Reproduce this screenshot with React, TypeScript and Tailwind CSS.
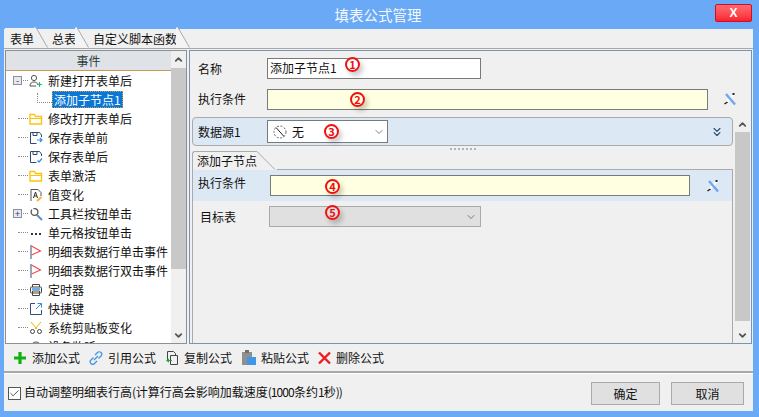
import { Check, ChevronDown, ChevronUp, ChevronsDown } from 'lucide-react';

const font = { fontFamily: '"Noto Sans CJK SC", "Liberation Sans", sans-serif' };

function Marker({ n, className }: { n: string; className: string }) {
  return (
    <span
      className={`absolute flex h-[15px] w-[15px] items-center justify-center rounded-full border-2 border-[#f01010] text-[11px] leading-none font-bold text-[#f01010] shadow-[3px_4px_5px_rgba(0,0,0,0.2)] ${className}`}
    >
      {n}
    </span>
  );
}

function Wand() {
  return (
    <svg width="14" height="14" viewBox="0 0 14 14" className="shrink-0">
      <path d="M11.500 1.500L2 12" stroke="#ffffff" strokeWidth="2.500" />
      <path d="M3 2l9 10.500" stroke="#6fa8ee" strokeWidth="2.400" />
      <path d="M1 11.500l3-2 1 1-3 2z" fill="#222" />
      <rect x="9.500" y="1" width="2" height="2" fill="#222" />
    </svg>
  );
}

function TabEdge({ active }: { active?: boolean }) {
  return (
    <svg width="14" height="21" viewBox="0 0 14 21" className="-ml-px shrink-0">
      <path d="M0 0.500 L2 0.500 L13.500 21 L0 21 Z" fill={active ? '#f0f0f0' : '#f4f4f4'} />
      <path d="M2 0.500 L13.500 20.500" stroke="#a8a8a8" fill="none" />
    </svg>
  );
}

type IconKind = 'user' | 'none' | 'folder' | 'saveIn' | 'saveOut' | 'value' | 'tool' | 'dots' | 'flag' | 'timer' | 'link' | 'scissors' | 'device';

function TreeIcon({ kind }: { kind: IconKind }) {
  const s = { width: 14, height: 14, viewBox: '0 0 14 14', fill: 'none' };
  switch (kind) {
    case 'user':
      return (
        <svg {...s}>
          <circle cx="5" cy="4" r="2.600" stroke="#555" />
          <path d="M1 12c0-3 2-4 4-4s3 .8 3.600 2M1 12h6" stroke="#555" />
          <path d="M10.500 8v5M8 10.500h5" stroke="#31b06e" strokeWidth="1.200" />
        </svg>
      );
    case 'folder':
      return (
        <svg {...s}>
          <path d="M1 12V2.500h4.500l1 2h6V12z" stroke="#ffc20e" strokeWidth="1.400" />
          <path d="M1 6.500h12" stroke="#ffc20e" />
        </svg>
      );
    case 'saveIn':
    case 'saveOut':
      return (
        <svg {...s}>
          <path d="M1.500 1.500h9l2 2.500v2M1.500 1.500v11h6" stroke="#2d4a6e" />
          <path d="M4 1.500v3h4v-3" stroke="#2d4a6e" />
          {kind === 'saveIn' ? (
            <path d="M8 9h5M11 7l2 2-2 2" stroke="#2f8fe0" strokeWidth="1.200" />
          ) : (
            <path d="M8.500 10.500l1.500 1.500 3-3.500" stroke="#2f8fe0" strokeWidth="1.200" />
          )}
        </svg>
      );
    case 'value':
      return (
        <svg {...s}>
          <path d="M2 13V1.500h7l3 3V8" stroke="#555" />
          <path d="M4.500 10l2-6 2 6M5.200 8h2.600" stroke="#333" />
          <path d="M8 13l4.500-4" stroke="#f4b53f" strokeWidth="2" />
        </svg>
      );
    case 'tool':
      return (
        <svg {...s}>
          <circle cx="5.500" cy="5" r="3.400" stroke="#555" strokeWidth="1.300" />
          <path d="M8 8l5 5" stroke="#5a8fc8" strokeWidth="2" />
          <path d="M3 1l2 3" stroke="#ffffff" strokeWidth="1.500" />
        </svg>
      );
    case 'dots':
      return (
        <svg {...s}>
          <path d="M2 8h2M6 8h2M10 8h2" stroke="#33334d" strokeWidth="2" />
        </svg>
      );
    case 'flag':
      return (
        <svg {...s}>
          <path d="M2 0v14" stroke="#33507a" />
          <path d="M2.500 1l9 5-9 4" stroke="#f04a4a" strokeWidth="1.100" />
        </svg>
      );
    case 'timer':
      return (
        <svg {...s}>
          <rect x="1.500" y="4" width="11" height="6" rx="1" stroke="#444" />
          <path d="M3.500 4V1.500h7V4M3.500 8h7v4.500h-7z" stroke="#444" />
          <path d="M3 6h8" stroke="#2f8fe0" strokeWidth="1.400" />
        </svg>
      );
    case 'link':
      return (
        <svg {...s}>
          <path d="M6 1.500H1.500v11h11V8" stroke="#33507a" />
          <path d="M7 7l5.500-5.500M8.500 1.500h4v4" stroke="#2f8fe0" />
        </svg>
      );
    case 'scissors':
      return (
        <svg {...s}>
          <path d="M2 1l6 7M12 1L6 8" stroke="#f0b400" />
          <circle cx="3.500" cy="10.500" r="2" stroke="#444" />
          <circle cx="10.500" cy="10.500" r="2" stroke="#444" />
        </svg>
      );
    case 'device':
      return (
        <svg {...s}>
          <circle cx="7" cy="7" r="5" stroke="#555" />
        </svg>
      );
    default:
      return <span className="inline-block h-[14px] w-[14px]" />;
  }
}

const events: { label: string; icon: IconKind; box?: '-' | '+'; child?: boolean; selected?: boolean }[] = [
  { label: '新建打开表单后', icon: 'user', box: '-' },
  { label: '添加子节点1', icon: 'none', child: true, selected: true },
  { label: '修改打开表单后', icon: 'folder' },
  { label: '保存表单前', icon: 'saveIn' },
  { label: '保存表单后', icon: 'saveOut' },
  { label: '表单激活', icon: 'folder' },
  { label: '值变化', icon: 'value' },
  { label: '工具栏按钮单击', icon: 'tool', box: '+' },
  { label: '单元格按钮单击', icon: 'dots' },
  { label: '明细表数据行单击事件', icon: 'flag' },
  { label: '明细表数据行双击事件', icon: 'flag' },
  { label: '定时器', icon: 'timer' },
  { label: '快捷键', icon: 'link' },
  { label: '系统剪贴板变化', icon: 'scissors' },
  { label: '设备监听', icon: 'device' },
];

function TreeRow({ row }: { row: (typeof events)[number] }) {
  if (row.child) {
    return (
      <div className="flex h-[19px] shrink-0 items-center pl-[31px]">
        <span className="mb-[4px] h-[10px] w-[15px] border-b border-l border-dotted border-[#8a8a8a]" />
        <span className="flex h-[17px] items-center border border-dotted border-[#c9a050] bg-[#0a76d6] px-px text-[12px] text-white">
          {row.label}
        </span>
      </div>
    );
  }
  return (
    <div className="relative flex h-[19px] shrink-0 items-center pl-[12px]">
      <span className="w-[10px] border-t border-dotted border-[#8a8a8a]" />
      {row.box && (
        <span className="absolute left-[7px] flex h-[9px] w-[9px] items-center justify-center border border-[#8a8f99] bg-[#e8e8ee] text-[9px] leading-none text-[#223a80]">
          {row.box}
        </span>
      )}
      <span className="ml-[1px]">
        <TreeIcon kind={row.icon} />
      </span>
      <span className="ml-[5px] text-[12px] whitespace-nowrap text-[#111]">{row.label}</span>
    </div>
  );
}

function ScrollBar({ thumbClass, arrowClass }: { thumbClass: string; arrowClass: string }) {
  return (
    <div className="flex w-[15px] shrink-0 flex-col items-center bg-[#f0f0f0]">
      <ChevronUp size={11} strokeWidth={4} className={`text-[#555] ${arrowClass}`} />
      <div className={`w-full bg-[#c8c8c8] ${thumbClass}`} />
      <div className="flex-1" />
      <ChevronDown size={11} strokeWidth={4} className="my-[2px] text-[#555]" />
    </div>
  );
}

function Tool({ icon, label, className }: { icon: React.ReactNode; label: string; className: string }) {
  return (
    <div className={`flex items-center gap-[5px] ${className}`}>
      {icon}
      <span className="text-[12px] text-[#111]">{label}</span>
    </div>
  );
}

export default function App() {
  return (
    <div className="flex h-[417px] w-[759px] flex-col overflow-hidden bg-[#69a9f5]" style={font}>
      {/* title bar */}
      <div className="relative flex h-[29px] shrink-0 items-center justify-center pr-[3px] text-[14.500px] text-[#f4f8ff]">
        填表公式管理
        <div className="absolute top-[4px] right-[7px] flex h-[18px] w-[37px] items-center justify-center rounded-[2px] border border-[#d80b1c] bg-gradient-to-b from-[#ff6a72] to-[#fa1d2e] text-[12px] leading-none font-bold text-white" style={{ fontFamily: '"Liberation Sans", sans-serif' }}>
          X
        </div>
      </div>

      <div className="mr-[6px] ml-[4px] flex flex-1 flex-col bg-[#f0f0f0]">
        {/* tabs */}
        <div className="flex h-[20px] shrink-0 items-end border-b border-[#a8a8a8] pl-[1px] text-[12px] text-[#111]">
          <div className="flex h-[20px] items-center bg-[#f0f0f0] pt-[2px] pr-[1px] pl-[5px]">表单</div>
          <TabEdge active />
          <div className="ml-[3px] flex h-[20px] items-center pt-[2px] pl-[1px]">总表</div>
          <TabEdge />
          <div className="ml-[3px] flex h-[20px] items-center pt-[2px] pl-[1px]">自定义脚本函数</div>
          <TabEdge />
        </div>

        <div className="mt-[1px] flex h-[294px] shrink-0 gap-[2px] pr-[1px] pl-[1px]">
          {/* events tree */}
          <div className="flex h-full w-[182px] shrink-0 overflow-hidden border border-[#8a9199] bg-white">
            <div className="flex min-w-0 flex-1 flex-col overflow-hidden">
              <div className="flex h-[20px] shrink-0 items-center justify-center border-b border-[#c8995a] bg-[#dfe3e8] text-[12px] text-[#2c3e3a]">
                事件
              </div>
              {events.map((row) => (
                <TreeRow key={row.label} row={row} />
              ))}
            </div>
            <ScrollBar thumbClass="h-[201px]" arrowClass="my-[3px]" />
          </div>

          {/* formula editor */}
          <div className="relative flex h-full flex-1 flex-col border border-[#7b93b3] pt-[6px] pr-[1px] pl-[2px]">
            <div className="flex h-[22px] shrink-0 items-center">
              <span className="w-[75px] pt-[2px] pl-[6px] text-[12px] text-[#111]">名称</span>
              <div className="flex h-[21px] w-[214px] items-center border border-[#7a7a7a] bg-white pl-[2px] text-[12px] text-[#111]">
                添加子节点1
              </div>
            </div>
            <div className="mt-[9px] flex h-[22px] shrink-0 items-center">
              <span className="w-[75px] pl-[6px] text-[12px] text-[#111]">执行条件</span>
              <div className="h-[21px] w-[441px] border border-[#7a7a7a] bg-[#ffffe1]" />
              <span className="ml-[15px]">
                <Wand />
              </span>
            </div>

            <div className="mt-[7px] flex flex-1 gap-[2px] overflow-hidden">
              <div className="flex w-[541px] shrink-0 flex-col">
                <div className="flex h-[29px] shrink-0 items-center rounded-[4px] border border-[#aaaaaa] bg-[#dde8f5]">
                  <span className="w-[74px] pl-[5px] text-[12px] text-[#111]">数据源1</span>
                  <div className="flex h-[23px] w-[121px] items-center border border-[#7a7a7a] bg-white pl-[5px] text-[12px] text-[#111]">
                    <svg width="14" height="14" viewBox="0 0 14 14" fill="none">
                      <circle cx="7" cy="7" r="6" stroke="#666" strokeDasharray="2 1.500" />
                      <path d="M3 2.500l8 9" stroke="#222" />
                    </svg>
                    <span className="ml-[5px]">无</span>
                    <ChevronDown size={12} strokeWidth={1.500} className="mr-[2px] ml-auto text-[#555]" />
                  </div>
                  <ChevronsDown size={14} strokeWidth={2} className="mr-[8px] ml-auto text-[#2d4a6e]" />
                </div>
                <div className="flex h-[5px] shrink-0 items-center justify-center">
                  <span className="w-[26px] border-t-2 border-dotted border-[#b4b4b4]" />
                </div>

                <div className="flex h-[19px] shrink-0 items-end">
                  <div className="flex h-[19px] items-center rounded-tl-[3px] border-t border-l border-[#aaaaaa] pl-[4px] text-[12px] text-[#111]">
                    添加子节点
                  </div>
                  <svg width="20" height="19" viewBox="0 0 20 19" className="shrink-0">
                    <path d="M0 0.500L18 18.500" stroke="#aaaaaa" fill="none" />
                  </svg>
                  <div className="flex-1 border-b border-[#aaaaaa]" />
                </div>
                <div className="flex flex-1 flex-col border-r border-l border-[#aaaaaa]">
                  <div className="flex h-[31px] shrink-0 items-center bg-[#dde8f5]">
                    <span className="mb-[6px] w-[77px] pl-[5px] text-[12px] text-[#111]">执行条件</span>
                    <div className="h-[21px] w-[420px] border border-[#7a7a7a] bg-[#ffffe1]" />
                    <span className="ml-[16px]">
                      <Wand />
                    </span>
                  </div>
                  <div className="mt-[5px] flex h-[21px] shrink-0 items-center">
                    <span className="w-[76px] pl-[7px] text-[12px] text-[#111]">目标表</span>
                    <div className="flex h-[21px] w-[212px] items-center justify-end border border-[#aaaaaa] bg-[#e0e0e0] pr-[3px]">
                      <ChevronDown size={12} strokeWidth={1.500} className="text-[#555]" />
                    </div>
                  </div>
                </div>
              </div>
              <ScrollBar thumbClass="h-[189px]" arrowClass="my-[2px]" />
            </div>

            <Marker n="1" className="top-[6px] left-[155px]" />
            <Marker n="2" className="top-[41px] left-[160px]" />
            <Marker n="3" className="top-[73px] left-[134px]" />
            <Marker n="4" className="top-[128px] left-[135px]" />
            <Marker n="5" className="top-[154px] left-[135px]" />
          </div>
        </div>

        {/* formula toolbar */}
        <div className="flex h-[29px] shrink-0 items-center border-b-2 border-[#a8a8a8]">
          <Tool
            className="ml-[9px] w-[76px]"
            label="添加公式"
            icon={
              <svg width="14" height="14" viewBox="0 0 14 14">
                <path d="M7 1v12M1 7h12" stroke="#12b012" strokeWidth="3.200" />
              </svg>
            }
          />
          <Tool
            className="w-[77px]"
            label="引用公式"
            icon={
              <svg width="14" height="14" viewBox="0 0 14 14" fill="none">
                <path d="M6 4l2.500-2.500a2 2 0 013.500 3.500L9.500 7.500M8 10l-2.500 2.500a2 2 0 01-3.500-3.500L4.500 6.500M5 9l4-4" stroke="#3f97e6" strokeWidth="1.300" />
              </svg>
            }
          />
          <Tool
            className="w-[76px]"
            label="复制公式"
            icon={
              <svg width="13" height="14" viewBox="0 0 13 14" fill="none">
                <path d="M1.500 9V.5h6l2 2V4M4.500 4.500h7v9h-7z" stroke="#444" />
                <path d="M1 9.500h5M3 8L1 9.500 3 11" stroke="#1da838" strokeWidth="1.200" />
              </svg>
            }
          />
          <Tool
            className="w-[76px]"
            label="粘贴公式"
            icon={
              <svg width="14" height="15" viewBox="0 0 14 15">
                <path d="M0 2h10v5H5v8H0z" fill="#8f8f8f" />
                <rect x="3" y="0" width="4" height="3" fill="#6f6f6f" />
                <rect x="5" y="7" width="9" height="8" fill="#3f97e6" />
              </svg>
            }
          />
          <Tool
            className=""
            label="删除公式"
            icon={
              <svg width="13" height="14" viewBox="0 0 13 14">
                <path d="M1 1.500l11 11M12 1.500l-11 11" stroke="#ee1c1c" strokeWidth="2.400" />
              </svg>
            }
          />
        </div>

        {/* footer */}
        <div className="flex flex-1 items-center border-t border-white pt-[2px]">
          <span className="mb-[1px] ml-[4px] flex h-[13px] w-[13px] items-center justify-center border border-[#555] bg-white">
            <Check size={11} strokeWidth={2} className="text-[#444]" />
          </span>
          <span className="mb-[3px] ml-[3px] text-[12px] whitespace-nowrap text-[#111]">
            自动调整明细表行高<span className="tracking-[-0.4px]">(</span>计算行高会影响加载速度
            <span className="tracking-[-0.9px]">(1000</span>条约<span className="tracking-[-0.9px]">1</span>秒<span className="tracking-[-1px]">))</span>
          </span>
          <button className="ml-auto h-[23px] w-[69px] border border-[#aaaaaa] bg-[#e0e0e0] text-[12px] text-[#111]">确定</button>
          <button className="mr-[9px] ml-[11px] h-[23px] w-[73px] border border-[#aaaaaa] bg-[#e0e0e0] text-[12px] text-[#111]">取消</button>
        </div>
      </div>
      <div className="h-[6px] shrink-0" />
    </div>
  );
}
